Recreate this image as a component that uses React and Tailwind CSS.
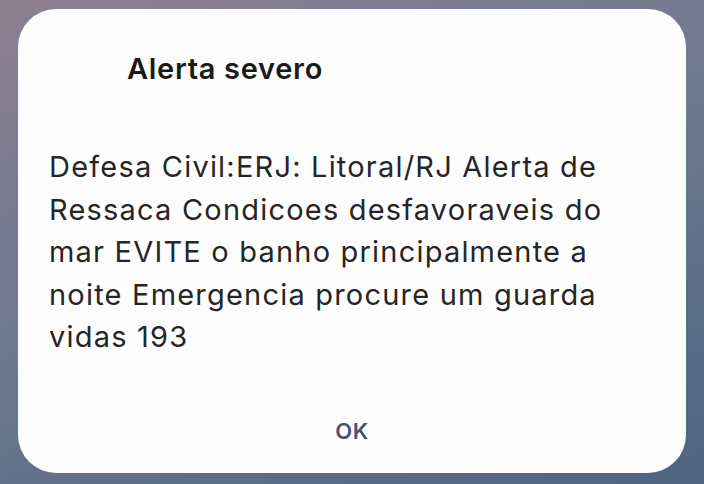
import React from 'react';

const lines = [
    'Defesa Civil:ERJ: Litoral/RJ Alerta de',
    'Ressaca Condicoes desfavoraveis do',
    'mar EVITE o banho principalmente a',
    'noite Emergencia procure um guarda',
    'vidas 193',
];

export default function App() {
    return (
        <div className="w-[704px] h-[484px] overflow-hidden bg-[linear-gradient(160deg,#8c7f8f_0%,#6f7a90_45%,#4d6482_100%)] px-[18px] pt-[9px] font-['Inter',sans-serif]">
            <div className="h-[464px] rounded-[38px] bg-[#fdfdfe] flex flex-col pt-[43px] pb-[29px]">
                <h1 className="pl-[109px] text-[29px] leading-[34px] font-semibold tracking-[0.7px] text-[#1a1a1a]">
                    Alerta severo
                </h1>
                <p className="mt-[60px] pl-[31px] text-[29px] leading-[42.5px] tracking-[1.2px] text-[#262626]">
                    {lines.map((l, i) => (
                        <span key={i} className="block whitespace-nowrap">{l}</span>
                    ))}
                </p>
                <div className="mt-auto flex justify-center">
                    <button className="text-[22px] leading-[26px] font-semibold tracking-[0.5px] text-[#4b4f73]">OK</button>
                </div>
            </div>
        </div>
    );
}
